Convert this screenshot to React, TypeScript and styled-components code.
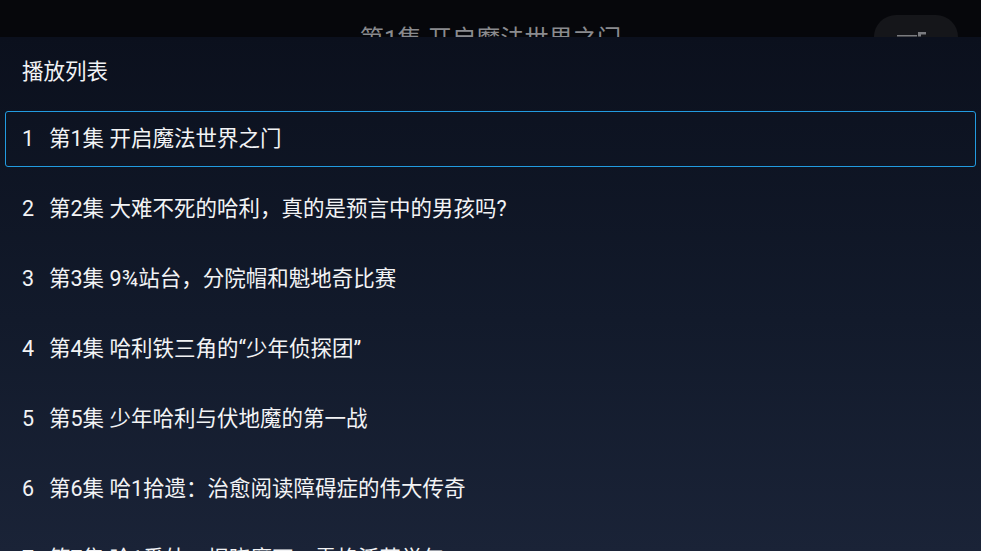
import React from "react";
import styled, { createGlobalStyle } from "styled-components";

const Global = createGlobalStyle`
  html, body { margin: 0; padding: 0; background: #06070b; }
  body { font-family: Roboto, "Noto Sans CJK SC", "Noto Sans", sans-serif; }
  * { box-sizing: border-box; }
`;

const Screen = styled.div`
  position: relative;
  width: 981px;
  height: 551px;
  overflow: hidden;
  background: #06070b;
`;

const TopBar = styled.div`
  height: 80px;
  display: flex;
  align-items: flex-start;
  justify-content: center;
  padding-top: 25px;
  position: relative;
`;

const NowTitle = styled.div`
  color: #8a8b8f;
  font-size: 24.2px;
  line-height: 28px;
  font-family: Roboto, "Noto Sans CJK SC", sans-serif;
`;

const CornerButton = styled.div`
  position: absolute;
  left: 874px;
  top: 15px;
  width: 84px;
  height: 60px;
  border-radius: 22px;
  background: #15161a;
`;

const Panel = styled.div`
  position: absolute;
  left: 0;
  right: 0;
  top: 37px;
  bottom: 0;
  background: linear-gradient(180deg, #0b101d 0%, #121a2b 55%, #1a2337 100%);
  padding: 19px 5px 0 5px;
`;

const Heading = styled.div`
  color: #f2f3f5;
  font-size: 21.5px;
  line-height: 28px;
  padding-left: 17px;
  font-family: "Noto Sans CJK SC", sans-serif;
`;

const List = styled.ul`
  list-style: none;
  margin: 27px 0 0 0;
  padding: 0;
  display: flex;
  flex-direction: column;
  gap: 14px;
`;

const Item = styled.li<{ $active?: boolean }>`
  height: 56px;
  display: flex;
  align-items: baseline;
  padding: 13px 0 0 16px;
  border: 1px solid ${(p) => (p.$active ? "#229be0" : "transparent")};
  border-radius: 3px;
  color: #f2f3f5;
  font-size: 21.5px;
  line-height: 28px;
  font-family: Roboto, "Noto Sans CJK SC", sans-serif;
`;

const Num = styled.span`
  width: 27px;
  flex: none;
`;

const Title = styled.span`
  white-space: nowrap;
`;

const episodes = [
  "第1集 开启魔法世界之门",
  "第2集 大难不死的哈利，真的是预言中的男孩吗?",
  "第3集 9¾站台，分院帽和魁地奇比赛",
  "第4集 哈利铁三角的“少年侦探团”",
  "第5集 少年哈利与伏地魔的第一战",
  "第6集 哈1拾遗：治愈阅读障碍症的伟大传奇",
  "第7集 哈1番外：揭晓魔石，霍格沃茨学年",
];

export default function App() {
  return (
    <Screen>
      <Global />
      <TopBar>
        <NowTitle>第1集 开启魔法世界之门</NowTitle>
        <CornerButton>
          <svg width="84" height="60" viewBox="0 0 84 60" style={{ display: "block" }}>
            <rect x="23" y="20" width="20" height="1.5" fill="#7a7b7f" />
            <path d="M44 21.5 V17 H52 V19.5 H47 V21.5 Z" fill="#7a7b7f" />
          </svg>
        </CornerButton>
      </TopBar>
      <Panel>
        <Heading>播放列表</Heading>
        <List>
          {episodes.map((t, i) => (
            <Item key={i} $active={i === 0}>
              <Num>{i + 1}</Num>
              <Title>{t}</Title>
            </Item>
          ))}
        </List>
      </Panel>
    </Screen>
  );
}
